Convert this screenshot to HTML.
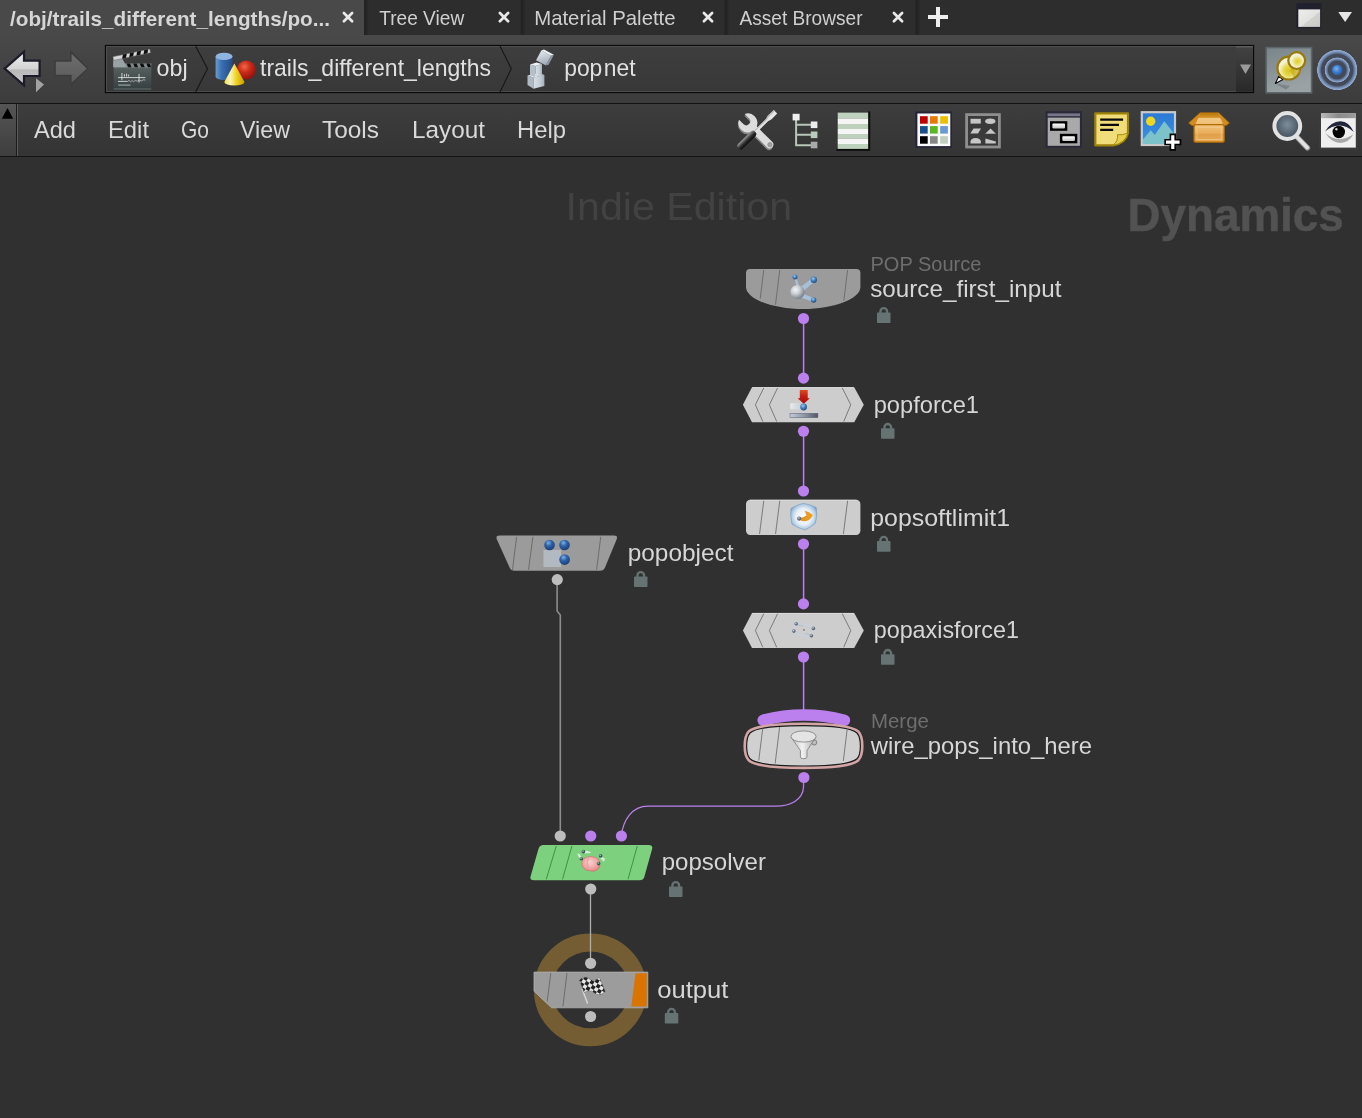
<!DOCTYPE html>
<html><head><meta charset="utf-8"><title>Network Editor</title>
<style>
html,body{margin:0;padding:0;background:#303030;overflow:hidden}
svg{display:block;will-change:transform}
text{font-family:"Liberation Sans",sans-serif}
</style></head><body>
<svg width="1362" height="1118" viewBox="0 0 1362 1118">
<defs>
<linearGradient id="gMenu" x1="0" y1="0" x2="0" y2="1"><stop offset="0" stop-color="#3d3d3d"/><stop offset="1" stop-color="#343434"/></linearGradient>
<linearGradient id="gStrip" x1="0" y1="0" x2="0" y2="1"><stop offset="0" stop-color="#555"/><stop offset="1" stop-color="#3e3e3e"/></linearGradient>
<linearGradient id="gField" x1="0" y1="0" x2="0" y2="1"><stop offset="0" stop-color="#3e3e3e"/><stop offset="1" stop-color="#383838"/></linearGradient>
<linearGradient id="gSep" x1="0" y1="0" x2="1" y2="0"><stop offset="0" stop-color="#202020"/><stop offset="0.3" stop-color="#232323"/><stop offset="1" stop-color="#2d2d2d"/></linearGradient>
<linearGradient id="gPath" x1="0" y1="0" x2="0" y2="1"><stop offset="0" stop-color="#494949"/><stop offset="1" stop-color="#3c3c3c"/></linearGradient>
</defs>

<rect x="0" y="0" width="1362" height="1118" fill="#303030"/>
<rect x="0" y="0" width="1362" height="36" fill="#2d2d2d"/>
<rect x="0" y="0" width="364" height="36" fill="#494949"/>
<rect x="364.2" y="0" width="5" height="35.4" fill="url(#gSep)"/>
<rect x="520.8" y="0" width="5" height="35.4" fill="url(#gSep)"/>
<rect x="724.6" y="0" width="5" height="35.4" fill="url(#gSep)"/>
<rect x="915.6" y="0" width="5" height="35.4" fill="url(#gSep)"/>
<rect x="0" y="35" width="1362" height="68" fill="url(#gPath)"/>
<rect x="0" y="103" width="1362" height="1" fill="#141414"/>
<rect x="0" y="104" width="1362" height="52" fill="url(#gMenu)"/>
<rect x="0" y="104" width="16" height="52" fill="url(#gStrip)"/>
<rect x="16" y="104" width="1" height="52" fill="#1c1c1c"/>
<rect x="17" y="104" width="1" height="52" fill="#5a5a5a"/>
<rect x="0" y="156" width="1362" height="1" fill="#141414"/>
<path d="M1.8 118.7 L13.2 118.7 L7.5 108 Z" fill="#000"/>
<text x="10" y="25.5" font-size="21" fill="#d6d6d6" textLength="320" lengthAdjust="spacingAndGlyphs" font-weight="bold" >/obj/trails_different_lengths/po...</text>
<text x="379.2" y="24.9" font-size="21" fill="#cfcfcf" textLength="85" lengthAdjust="spacingAndGlyphs" >Tree View</text>
<text x="534.2" y="24.9" font-size="21" fill="#cfcfcf" textLength="141.4" lengthAdjust="spacingAndGlyphs" >Material Palette</text>
<text x="739.5" y="24.9" font-size="21" fill="#cfcfcf" textLength="123" lengthAdjust="spacingAndGlyphs" >Asset Browser</text>
<path d="M343.9 13.000000000000002 L352.1 21.200000000000003 M352.1 13.000000000000002 L343.9 21.200000000000003" stroke="#e8e8e8" stroke-width="2.7" stroke-linecap="round" fill="none"/>
<path d="M499.9 13.000000000000002 L508.1 21.200000000000003 M508.1 13.000000000000002 L499.9 21.200000000000003" stroke="#e8e8e8" stroke-width="2.7" stroke-linecap="round" fill="none"/>
<path d="M703.9 13.000000000000002 L712.1 21.200000000000003 M712.1 13.000000000000002 L703.9 21.200000000000003" stroke="#e8e8e8" stroke-width="2.7" stroke-linecap="round" fill="none"/>
<path d="M893.9 13.000000000000002 L902.1 21.200000000000003 M902.1 13.000000000000002 L893.9 21.200000000000003" stroke="#e8e8e8" stroke-width="2.7" stroke-linecap="round" fill="none"/>
<path d="M938 7 V27 M928 17 H948" stroke="#eee" stroke-width="4" fill="none"/>
<rect x="105.5" y="45.5" width="1148" height="47" fill="url(#gField)" stroke="#0a0a0a" stroke-width="1.3"/>
<rect x="106.6" y="46.6" width="1145.8" height="44.8" fill="none" stroke="#5a5a5a" stroke-width="0.9" opacity="0.8"/>
<text x="156.6" y="76.2" font-size="24" fill="#e0e0e0" textLength="31" lengthAdjust="spacingAndGlyphs" >obj</text>
<text x="260" y="76.2" font-size="24" fill="#e0e0e0" textLength="231" lengthAdjust="spacingAndGlyphs" >trails_different_lengths</text>
<text x="564.2" y="76.2" dx="0 0 0 1.6" font-size="24" fill="#e0e0e0" textLength="71.4" lengthAdjust="spacingAndGlyphs">popnet</text>
<text x="34" y="138" font-size="24.5" fill="#d9d9d9" textLength="42" lengthAdjust="spacingAndGlyphs" >Add</text>
<text x="108" y="138" font-size="24.5" fill="#d9d9d9" textLength="41" lengthAdjust="spacingAndGlyphs" >Edit</text>
<text x="181" y="138" font-size="24.5" fill="#d9d9d9" textLength="28" lengthAdjust="spacingAndGlyphs" >Go</text>
<text x="240" y="138" font-size="24.5" fill="#d9d9d9" textLength="50" lengthAdjust="spacingAndGlyphs" >View</text>
<text x="322" y="138" font-size="24.5" fill="#d9d9d9" textLength="57" lengthAdjust="spacingAndGlyphs" >Tools</text>
<text x="412" y="138" font-size="24.5" fill="#d9d9d9" textLength="73" lengthAdjust="spacingAndGlyphs" >Layout</text>
<text x="517" y="138" font-size="24.5" fill="#d9d9d9" textLength="49" lengthAdjust="spacingAndGlyphs" >Help</text>
<defs>
<linearGradient id="lgArrow" x1="0" y1="0" x2="0" y2="1"><stop offset="0" stop-color="#f0f0f0"/><stop offset="0.5" stop-color="#d4d4d4"/><stop offset="0.55" stop-color="#b9b9b9"/><stop offset="1" stop-color="#c9c9c9"/></linearGradient>
<linearGradient id="lgArrowD" x1="0" y1="0" x2="0" y2="1"><stop offset="0" stop-color="#6e6e6e"/><stop offset="1" stop-color="#5a5a5a"/></linearGradient>
<linearGradient id="lgClap" x1="0" y1="0" x2="0" y2="1"><stop offset="0" stop-color="#56605f"/><stop offset="1" stop-color="#363f40"/></linearGradient>
<linearGradient id="lgCyl" x1="0" y1="0" x2="1" y2="0"><stop offset="0" stop-color="#6b9bd0"/><stop offset="0.35" stop-color="#3a70b4"/><stop offset="1" stop-color="#244a82"/></linearGradient>
<radialGradient id="rgRed" cx="0.4" cy="0.32" r="0.7"><stop offset="0" stop-color="#ee6a4a"/><stop offset="0.45" stop-color="#cc2a18"/><stop offset="1" stop-color="#8e120c"/></radialGradient>
<linearGradient id="lgCone" x1="0" y1="0" x2="1" y2="0"><stop offset="0" stop-color="#f6e04a"/><stop offset="0.3" stop-color="#fdf6b8"/><stop offset="0.6" stop-color="#f0d020"/><stop offset="1" stop-color="#c8a000"/></linearGradient>
<linearGradient id="lgCubeA" x1="0" y1="0" x2="1" y2="1"><stop offset="0" stop-color="#e4e9ee"/><stop offset="1" stop-color="#9aa6b2"/></linearGradient>
<linearGradient id="lgCubeB" x1="0" y1="0" x2="1" y2="0"><stop offset="0" stop-color="#d9e0e6"/><stop offset="0.6" stop-color="#c3ced7"/><stop offset="1" stop-color="#a3afba"/></linearGradient>
<linearGradient id="lgDrop" x1="0" y1="0" x2="0" y2="1"><stop offset="0" stop-color="#424242"/><stop offset="1" stop-color="#292929"/></linearGradient>
<linearGradient id="lgPinBg" x1="0" y1="0" x2="0.4" y2="1"><stop offset="0" stop-color="#79858a"/><stop offset="1" stop-color="#9aa2a4"/></linearGradient>
<radialGradient id="rgPin" cx="0.55" cy="0.55" r="0.5"><stop offset="0" stop-color="#e2cf2a"/><stop offset="0.35" stop-color="#eadc62"/><stop offset="0.7" stop-color="#f4f0cc"/><stop offset="1" stop-color="#f5f2dc"/></radialGradient>
<radialGradient id="rgPinB" cx="0.5" cy="0.62" r="0.55"><stop offset="0" stop-color="#d8c41c"/><stop offset="0.4" stop-color="#e6d84e"/><stop offset="0.75" stop-color="#f4f0d0"/><stop offset="1" stop-color="#f6f4e2"/></radialGradient>
<radialGradient id="rgTgtDot" cx="0.42" cy="0.38" r="0.65"><stop offset="0" stop-color="#7fb4ee"/><stop offset="0.5" stop-color="#3f7fd0"/><stop offset="1" stop-color="#2a5aa0"/></radialGradient>
<radialGradient id="rgRingO" cx="0.5" cy="0.5" r="0.5"><stop offset="0.76" stop-color="#3f4d63" stop-opacity="0"/><stop offset="0.8" stop-color="#53647f"/><stop offset="0.9" stop-color="#7f98c0"/><stop offset="0.97" stop-color="#8fa8cf"/><stop offset="1" stop-color="#8fa8cf" stop-opacity="0"/></radialGradient>
<radialGradient id="rgRingI" cx="0.5" cy="0.5" r="0.5"><stop offset="0.68" stop-color="#3f4d63" stop-opacity="0"/><stop offset="0.74" stop-color="#53647f"/><stop offset="0.88" stop-color="#7f98c0"/><stop offset="0.96" stop-color="#8fa8cf"/><stop offset="1" stop-color="#8fa8cf" stop-opacity="0"/></radialGradient>
<linearGradient id="lgWin" x1="0" y1="0" x2="1" y2="1"><stop offset="0" stop-color="#ededeb"/><stop offset="0.55" stop-color="#e2e2df"/><stop offset="0.56" stop-color="#d2d2cf"/><stop offset="1" stop-color="#c8c8c5"/></linearGradient>
<linearGradient id="lgHandle" x1="0" y1="0" x2="1" y2="1"><stop offset="0" stop-color="#7a7a7a"/><stop offset="0.4" stop-color="#3a3a3a"/><stop offset="1" stop-color="#151515"/></linearGradient>
<linearGradient id="lgHandle2" x1="0" y1="0" x2="0" y2="1"><stop offset="0" stop-color="#0c0c0c"/><stop offset="0.45" stop-color="#2e2e2e"/><stop offset="0.75" stop-color="#6a6a6a"/><stop offset="1" stop-color="#9a9a9a"/></linearGradient>
<linearGradient id="lgMini" x1="0" y1="0" x2="0" y2="1"><stop offset="0" stop-color="#ffffff"/><stop offset="1" stop-color="#c4c4c4"/></linearGradient>
<linearGradient id="lgImg" x1="0" y1="0" x2="0" y2="1"><stop offset="0" stop-color="#2a78d4"/><stop offset="1" stop-color="#3e94e0"/></linearGradient>
<linearGradient id="lgBoxTop" x1="0" y1="0" x2="0" y2="1"><stop offset="0" stop-color="#b87808"/><stop offset="0.4" stop-color="#d89a30"/><stop offset="0.45" stop-color="#f2c987"/><stop offset="1" stop-color="#eebc70"/></linearGradient>
<linearGradient id="lgBox" x1="0" y1="0" x2="0" y2="1"><stop offset="0" stop-color="#f2c27c"/><stop offset="0.5" stop-color="#e8ac58"/><stop offset="0.52" stop-color="#e0a048"/><stop offset="1" stop-color="#e6aa58"/></linearGradient>
<radialGradient id="rgLens" cx="0.5" cy="0.45" r="0.6"><stop offset="0" stop-color="#7d8e9c"/><stop offset="0.6" stop-color="#55636f"/><stop offset="1" stop-color="#3e4a55"/></radialGradient>
<linearGradient id="lgEyeBar" x1="0" y1="0" x2="1" y2="0"><stop offset="0" stop-color="#b9b9b9"/><stop offset="0.5" stop-color="#8a8a8a"/><stop offset="1" stop-color="#9c9c9c"/></linearGradient>
</defs>
<path d="M4.6 68.6 L24 51.6 V60.6 H39.6 V76 H24 V85.4 Z" fill="url(#lgArrow)" stroke="#1b1b29" stroke-width="2.2" stroke-linejoin="miter"/>
<path d="M36 78.2 V92.2 L44 84.6 Z" fill="#a2a2a2"/>
<path d="M88 68.6 L70.8 52 V61 H55 V75.6 H70.8 V84.6 Z" fill="url(#lgArrowD)" stroke="#3c3c3c" stroke-width="1.6"/>
<path d="M195.6 46 L207.5 68.75 L195.6 92" fill="none" stroke="#161616" stroke-width="1.1"/>
<path d="M500 46 L511.3 68.75 L500 92" fill="none" stroke="#161616" stroke-width="1.1"/>
<g>
<rect x="113.6" y="67.2" width="37.7" height="22.2" rx="0.8" fill="url(#lgClap)"/>
<path d="M113.6 67.6 H151.3 M113.6 89 H151.3" stroke="#7f8b8c" stroke-width="0.8" opacity="0.8"/>
<rect x="113.4" y="63.4" width="37.9" height="3.9" fill="#7e8788"/>
<path d="M126.6 63.4 h3.4 l1.5 3.9 h-3.4 Z" fill="#0e0e0e"/>
<path d="M133.2 63.4 h3.4 l1.5 3.9 h-3.4 Z" fill="#0e0e0e"/>
<path d="M139.8 63.4 h3.4 l1.5 3.9 h-3.4 Z" fill="#0e0e0e"/>
<path d="M146.4 63.4 h3.4 l1.5 3.9 h-3.4 Z" fill="#0e0e0e"/>
<path d="M113.2 57.3 H121.6 L126 65.6 V67 H113.2 Z" fill="#99a2a5"/>
<path d="M113.2 57.3 H121.6 L122.4 58.8 H113.2 Z" fill="#c4cacc"/>
<g transform="rotate(-11.8 113.5 58.6)"><rect x="113.5" y="56.6" width="37.4" height="3.8" fill="#d6d6d6" stroke="#6f6f6f" stroke-width="0.5"/>
<path d="M123.5 56.6 h4 l-1.6 3.8 h-4 Z" fill="#101010"/>
<path d="M130.8 56.6 h4 l-1.6 3.8 h-4 Z" fill="#101010"/>
<path d="M138.1 56.6 h4 l-1.6 3.8 h-4 Z" fill="#101010"/>
<path d="M145.4 56.6 h4 l-1.6 3.8 h-4 Z" fill="#101010"/>
</g>
<path d="M118 77.6 H145.4 M118 81.4 H127.5" stroke="#f0f0f0" stroke-width="0.8"/>
<path d="M127.5 81.4 l1.5 -1 l1.5 1.4 l1.6 -1.2 l1.6 1 l1.8 -1.2 l1.8 0.8 l2 -1 l2 0.8 l2 -1.2 l2 0.2" stroke="#e4e4e4" stroke-width="0.6" fill="none"/>
<path d="M121.9 73 V80.2 M124.4 74.2 V76.6 M126.6 73.6 V76.6 M128.6 74.6 V76.6 M139 74 V82.6" stroke="#f0f0f0" stroke-width="0.8"/>
<rect x="118.3" y="84.4" width="12.2" height="1.4" fill="#8b9596"/>
</g>
<g>
<path d="M215.6 56.5 V76.5 A8.4 3.6 0 0 0 232.5 76.5 V56.5 Z" fill="url(#lgCyl)"/>
<ellipse cx="224.05" cy="56.4" rx="8.45" ry="3.7" fill="#8fb4de"/>
<circle cx="246.3" cy="70" r="9.5" fill="url(#rgRed)"/>
<path d="M234.4 63.6 L224.3 81.9 A10.1 3.7 0 0 0 244.5 81.9 Z" fill="url(#lgCone)"/>
</g>
<g>
<path d="M527.5 75.5 L533.5 77.5 V88.8 L527.5 85 Z" fill="#aebbc6"/>
<path d="M533.5 77.5 L544.4 75 V86 L533.5 88.8 Z" fill="url(#lgCubeB)"/>
<path d="M527.5 75.5 L538 73 L544.4 75 L533.5 77.5 Z" fill="#e9edf1"/>
<path d="M530 64.5 L535.5 66 V77 L530 75.5 Z" fill="#b4c0ca"/>
<path d="M535.5 66 L542 64 V75 L535.5 77 Z" fill="url(#lgCubeB)"/>
<path d="M530 64.5 L536.5 62.5 L542 64 L535.5 66 Z" fill="#eef1f4"/>
<g transform="rotate(28 543.6 58)"><rect x="538" y="52.4" width="11.2" height="11.2" fill="url(#lgCubeA)"/><path d="M538 52.4 L540 50.4 H551.2 L549.2 52.4 Z" fill="#eef2f5"/><path d="M549.2 52.4 L551.2 50.4 V61.6 L549.2 63.6 Z" fill="#8a96a3"/></g>
</g>
<rect x="1236" y="46.3" width="17" height="45.5" fill="url(#lgDrop)"/>
<rect x="1236" y="46.3" width="17" height="1" fill="#6a6a6a"/>
<path d="M1240 64.6 H1251 L1245.5 73.9 Z" fill="#9a9a9a"/>
<rect x="1266.2" y="47.6" width="45.4" height="45.2" fill="url(#lgPinBg)" stroke="#5c676b" stroke-width="1.6"/>
<path d="M1275.4 83.6 L1290 86 L1286 89.5 Z" fill="#6f787b" opacity="0.7"/>
<path d="M1275.4 83.4 L1278.6 76.4 L1283 79.6 Z" fill="#fff" stroke="#0a0a0a" stroke-width="1.1" stroke-linejoin="round"/>
<circle cx="1288.8" cy="68.1" r="11.4" fill="url(#rgPinB)" stroke="#98790a" stroke-width="2.2"/>
<path d="M1290 70 L1296 62 L1301 72 L1294 78 Z" fill="#b89a10" opacity="0.55"/>
<circle cx="1296.7" cy="60.6" r="8.4" fill="url(#rgPin)" stroke="#98790a" stroke-width="2.2"/>
<circle cx="1337.2" cy="70" r="18" fill="#46506a" opacity="0.55"/>
<circle cx="1337.2" cy="70" r="20.4" fill="url(#rgRingO)"/>
<circle cx="1337.2" cy="70" r="12.8" fill="url(#rgRingI)"/>
<circle cx="1337.2" cy="70" r="5.3" fill="url(#rgTgtDot)"/>
<rect x="1296.4" y="3.2" width="25" height="25" fill="#20202f"/>
<rect x="1298.3" y="9.4" width="21.8" height="17.5" fill="url(#lgWin)"/>
<path d="M1338.3 11.9 H1352 L1345.1 22 Z" fill="#e6e6e6"/>
<g>
<g transform="translate(747.4 124.60000000000001) rotate(45)">
<path d="M-8.6 -4 A9.5 9.5 0 0 1 8.7 -3.8 H30.6 A3.8 3.8 0 0 1 30.6 3.8 H8.7 A9.5 9.5 0 0 1 -8.6 4 H-2.4 A4 4 0 0 0 -2.4 -4 Z" fill="#858585"/>
</g>
<g transform="translate(747.9 122.9) rotate(45)">
<path d="M-8.6 -4 A9.5 9.5 0 0 1 8.7 -3.8 H30.6 A3.8 3.8 0 0 1 30.6 3.8 H8.7 A9.5 9.5 0 0 1 -8.6 4 H-2.4 A4 4 0 0 0 -2.4 -4 Z" fill="#dcdcdc"/>
</g>
<circle cx="769.9" cy="144.7" r="2.1" fill="#a4a4a4" stroke="#7c7c7c" stroke-width="0.7"/>
<g transform="translate(775.5 111.75) rotate(135.4)">
<path d="M0 -2.4 L8 -2.6 L12 -1.5 H29 V1.5 H12 L8 2.6 L0 2.4 Z" fill="#e6e6e6"/>
<path d="M0 1 L8 1.2 L12 0.4 H29 V1.5 H12 L8 2.6 L0 2.4 Z" fill="#b4b4b4"/>
<rect x="28.6" y="-3.3" width="23.4" height="6.6" rx="2.6" fill="url(#lgHandle2)"/>
</g>
</g>
<g>
<path d="M796.1 120 V145.2 H811 M796.1 124.8 H811 M796.1 134.8 H811" fill="none" stroke="#b7c6b7" stroke-width="2"/>
<rect x="792.6" y="113.8" width="7" height="6.6" fill="#f0f0f0"/>
<rect x="810.8" y="121.5" width="6.6" height="6.6" fill="#ececec"/>
<rect x="810.8" y="131.5" width="6.6" height="6.6" fill="#b9ccb9"/>
<rect x="810.8" y="141.7" width="6.6" height="6.6" fill="#a9a9a9"/>
</g>
<g>
<rect x="836.4" y="111.4" width="33.8" height="39.4" fill="#0c0c0c"/>
<rect x="836.4" y="111.4" width="31.8" height="37.4" fill="#4a4a4a"/>
<rect x="837.8" y="112.7" width="30.3" height="5.85" fill="#bdd1bd"/>
<rect x="837.8" y="118.5" width="30.3" height="5.55" fill="#f5f5f5"/>
<rect x="837.8" y="124" width="30.3" height="5.05" fill="#bdd1bd"/>
<rect x="837.8" y="129" width="30.3" height="5.05" fill="#f5f5f5"/>
<rect x="837.8" y="134" width="30.3" height="4.65" fill="#bdd1bd"/>
<rect x="837.8" y="138.6" width="30.3" height="5.45" fill="#f5f5f5"/>
<rect x="837.8" y="144" width="30.3" height="4.85" fill="#bdd1bd"/>
</g>
<g>
<rect x="915.3" y="111.5" width="36.6" height="36.2" fill="#23233a"/>
<rect x="917.4" y="113.5" width="32.9" height="32.6" fill="#fafafa"/>
<rect x="920" y="116.2" width="7.7" height="7.5" fill="#c00000"/>
<rect x="930" y="116.2" width="7.7" height="7.5" fill="#e87800"/>
<rect x="940.2" y="116.2" width="7.7" height="7.5" fill="#e8c000"/>
<rect x="920" y="126.1" width="7.7" height="7.5" fill="#18508e"/>
<rect x="930" y="126.1" width="7.7" height="7.5" fill="#58b820"/>
<rect x="940.2" y="126.1" width="7.7" height="7.5" fill="#6a98d0"/>
<rect x="920" y="136.2" width="7.7" height="7.5" fill="#000"/>
<rect x="930" y="136.2" width="7.7" height="7.5" fill="#868686"/>
<rect x="940.2" y="136.2" width="7.7" height="7.5" fill="#c2cdc2"/>
</g>
<g>
<rect x="966.6" y="114.6" width="32.8" height="32.4" fill="#3a3a3a" stroke="#8e8e8e" stroke-width="2.8"/>
<rect x="970.5" y="118.8" width="10.3" height="4.8" fill="#c6c6c6"/>
<ellipse cx="990.3" cy="121.2" rx="5.1" ry="2.7" fill="#c6c6c6"/>
<path d="M973.5 128.4 H981 L978 133.6 H970.3 Z" fill="#c6c6c6"/>
<path d="M990.6 128.6 L995.8 133.8 H985.2 Z" fill="#c6c6c6"/>
<path d="M970.5 143.6 V141.5 Q971 138 975.7 138 Q980.4 138 980.9 141.5 V143.6 Z" fill="#c6c6c6"/>
<path d="M985.4 138.6 L995.8 141.4 V143.6 H985.4 Z" fill="#c6c6c6"/>
</g>
<g>
<rect x="1045.6" y="111.2" width="36.4" height="36.4" fill="#29293a"/>
<rect x="1047.6" y="113.4" width="32.4" height="2.8" fill="#777789"/>
<rect x="1047.7" y="117.6" width="32.2" height="28.2" fill="#a9a9a9"/>
<rect x="1050" y="121.2" width="17.3" height="9.6" fill="#000"/>
<rect x="1052.4" y="123.6" width="12.6" height="4.8" rx="0.8" fill="url(#lgMini)"/>
<rect x="1059.9" y="133.8" width="17.4" height="9.5" fill="#000"/>
<rect x="1062.3" y="136.2" width="12.6" height="4.7" rx="0.8" fill="url(#lgMini)"/>
</g>
<g>
<path d="M1095.3 113.3 H1128 V133 Q1126 143 1113 145.4 H1095.3 Z" fill="#f0dc78" stroke="#9c8208" stroke-width="2.2" stroke-linejoin="round"/>
<path d="M1128 133 Q1122 135.6 1117.5 134.6 Q1118.5 141 1113 145.4 Q1125 143.5 1128 133 Z" fill="#e6cf4e" stroke="#9c8208" stroke-width="0.9"/>
<path d="M1100.2 119.7 H1123.1 M1100.2 124.8 H1119 M1100.2 129.8 H1113.2" stroke="#0a0a0a" stroke-width="2.3"/>
</g>
<g>
<rect x="1141.8" y="112.2" width="33.2" height="32.8" fill="url(#lgImg)" stroke="#c9c9c9" stroke-width="2.2"/>
<circle cx="1150.7" cy="121.2" r="4.7" fill="#ecd71c"/>
<path d="M1143 143.9 V139.5 L1150.7 130.3 L1154.8 135 L1164.3 121.3 L1173.9 133.5 V143.9 Z" fill="#7cc3c9"/>
<path d="M1172.8 133.5 V150.8 M1164.3 142.1 H1181.3" stroke="#000" stroke-width="6.4"/>
<path d="M1172.8 135.3 V149 M1166 142.1 H1179.6" stroke="#fff" stroke-width="3.2"/>
</g>
<g>
<path d="M1200 112.8 H1218.8 L1229.4 123 L1226 125.6 H1192 L1188.6 123 Z" fill="#d28a22" stroke="#a86400" stroke-width="0.8" stroke-linejoin="round"/>
<path d="M1200.6 113.4 H1218.2 L1223.4 124.8 H1195 Z" fill="url(#lgBoxTop)"/>
<rect x="1194" y="124.7" width="30.2" height="17.5" rx="2" fill="url(#lgBox)" stroke="#b06a00" stroke-width="1.3"/>
<rect x="1197" y="127.2" width="24.2" height="12.4" fill="none" stroke="#f4cf94" stroke-width="0.8" opacity="0.8"/>
</g>
<g>
<path d="M1297 137 L1307.4 147.8" stroke="#9a9a9a" stroke-width="5.4" stroke-linecap="round"/>
<path d="M1297 137 L1307.2 147.4" stroke="#e2e2e2" stroke-width="3.6" stroke-linecap="round"/>
<circle cx="1287.3" cy="126" r="12.9" fill="url(#rgLens)" stroke="#e2e2e2" stroke-width="4"/>
</g>
<g>
<rect x="1320" y="112.4" width="36.8" height="36.2" fill="#efefef" stroke="#3b3b3b" stroke-width="2"/>
<rect x="1321" y="113.4" width="34.8" height="4.8" fill="url(#lgEyeBar)"/>
<path d="M1325.4 133 Q1331 142.8 1340.5 143 Q1349 142.6 1353.6 134 Q1347 139 1339 139 Q1331 138.5 1325.4 133 Z" fill="#a9a9a9"/>
<path d="M1325 131.4 Q1331 121.4 1340.4 121.2 Q1349.4 121.6 1353.8 132 Q1347.4 125.6 1339.6 125.4 Q1331.6 125.6 1325 131.4 Z" fill="#22263a"/>
<circle cx="1338.8" cy="132" r="6.2" fill="#050505"/>
<circle cx="1336.4" cy="129.2" r="1.2" fill="#d0d0d0"/>
</g>
<defs>
<radialGradient id="rgSil" cx="0.36" cy="0.34" r="0.7"><stop offset="0" stop-color="#f4f6f8"/><stop offset="0.45" stop-color="#c9cdd2"/><stop offset="1" stop-color="#727a84"/></radialGradient>
<radialGradient id="rgBlue" cx="0.4" cy="0.32" r="0.7"><stop offset="0" stop-color="#9ecdf2"/><stop offset="0.45" stop-color="#4a86c2"/><stop offset="1" stop-color="#1f4a7c"/></radialGradient>
<radialGradient id="rgBlueD" cx="0.4" cy="0.3" r="0.75"><stop offset="0" stop-color="#7fb0e6"/><stop offset="0.4" stop-color="#2f64ac"/><stop offset="1" stop-color="#163a70"/></radialGradient>
<radialGradient id="rgDark" cx="0.4" cy="0.35" r="0.7"><stop offset="0" stop-color="#c9d3dd"/><stop offset="0.5" stop-color="#67727f"/><stop offset="1" stop-color="#4a5562"/></radialGradient>
<radialGradient id="rgTeal" cx="0.4" cy="0.35" r="0.7"><stop offset="0" stop-color="#b9d0cc"/><stop offset="0.5" stop-color="#3b5c58"/><stop offset="1" stop-color="#28443f"/></radialGradient>
<linearGradient id="lgRed" x1="0" y1="0" x2="0" y2="1"><stop offset="0" stop-color="#dc4a1e"/><stop offset="0.5" stop-color="#c41a10"/><stop offset="1" stop-color="#a80d0d"/></linearGradient>
<linearGradient id="lgBar" x1="0" y1="0" x2="1" y2="0"><stop offset="0" stop-color="#c3cad8"/><stop offset="0.5" stop-color="#8f98a8"/><stop offset="1" stop-color="#4f5663"/></linearGradient>
<linearGradient id="lgTrail" x1="0" y1="0" x2="1" y2="0"><stop offset="0" stop-color="#ffffff" stop-opacity="0.6"/><stop offset="1" stop-color="#cfe0f0" stop-opacity="0.25"/></linearGradient>
<radialGradient id="rgShield" cx="0.5" cy="0.5" r="0.56"><stop offset="0" stop-color="#ffffff"/><stop offset="0.55" stop-color="#e6eff6"/><stop offset="0.85" stop-color="#a9c7e0"/><stop offset="1" stop-color="#6f9cc6"/></radialGradient>
<linearGradient id="lgOr" x1="0" y1="0" x2="1" y2="0"><stop offset="0" stop-color="#d9932b"/><stop offset="1" stop-color="#f6a01c"/></linearGradient>
<linearGradient id="lgFun" x1="0" y1="0" x2="1" y2="0"><stop offset="0" stop-color="#bdbdbd"/><stop offset="0.45" stop-color="#f2f2f2"/><stop offset="1" stop-color="#a8a8a8"/></linearGradient>
<radialGradient id="rgBrain" cx="0.45" cy="0.4" r="0.65"><stop offset="0" stop-color="#f7d2d2"/><stop offset="0.6" stop-color="#f2a4a4"/><stop offset="1" stop-color="#e07f7f"/></radialGradient>
<pattern id="chk" width="7.4" height="7.4" patternUnits="userSpaceOnUse" patternTransform="translate(580 977) rotate(32)"><rect width="7.4" height="7.4" fill="#e6e6e6"/><rect width="3.7" height="3.7" fill="#222"/><rect x="3.7" y="3.7" width="3.7" height="3.7" fill="#222"/></pattern>
</defs>
<circle cx="590.3" cy="989.9" r="47.4" fill="none" stroke="#745d33" stroke-width="18"/>
<path d="M803.6 318.5 V378.1" stroke="#bb80ee" stroke-width="1.5" fill="none"/>
<path d="M803.6 431.25 V491" stroke="#bb80ee" stroke-width="1.5" fill="none"/>
<path d="M803.6 544 V604" stroke="#bb80ee" stroke-width="1.5" fill="none"/>
<path d="M803.6 657 V712" stroke="#bb80ee" stroke-width="1.5" fill="none"/>
<path d="M803.7 777.5 L803.5 787 C803 800 790 806.1 776 806.1 L648 806.1 C632 806.1 623 820 621.4 836" stroke="#bb80ee" stroke-width="1.25" fill="none"/>
<path d="M557.1 580 V611 L560.3 615 V836" stroke="#8c8c8c" stroke-width="1.6" fill="none"/>
<path d="M590.5 889 V963" stroke="#adadad" stroke-width="1.3" fill="none"/>
<path d="M750 269 H856.4 Q860.4 269 860.4 273 V287 C860.4 299 833 309 803.2 309 C773 309 746 299 746 287 V273 Q746 269 750 269 Z" fill="#9b9b9b"/>
<path d="M763.75 270 L760.224 298.7" stroke="#6a6a6a" stroke-width="0.9"/>
<path d="M779.75 270 L775.4868571428572 304.7" stroke="#6a6a6a" stroke-width="0.9"/>
<path d="M847.6 270 L843.8405714285715 300.6" stroke="#6a6a6a" stroke-width="0.9"/>
<circle cx="803.5" cy="318.5" r="5.6" fill="#bb80ee"/>
<g transform="translate(877 307)"><path d="M3.4 7 V4.55 A3.35 3.35 0 0 1 10.1 4.55 V7" fill="none" stroke="#667373" stroke-width="2.3"/><rect x="0" y="5.4" width="13.5" height="10.6" rx="0.8" fill="#667373"/></g>
<text x="870.5" y="270.9" font-size="21" fill="#6e6e6e" textLength="110.9" lengthAdjust="spacingAndGlyphs">POP Source</text>
<text x="870.2" y="296.7" font-size="23.2" fill="#d6d6d6" textLength="191.3" lengthAdjust="spacingAndGlyphs">source_first_input</text>
<g>
<path d="M797 288 L794.2 277.5 L796.3 277 L799.6 287 Z" fill="#a9c3e0" opacity="0.9"/>
<path d="M800.5 287 L812.5 278 L814.8 281.3 L803 291.5 Z" fill="#a9c3e0" opacity="0.9"/>
<path d="M802.5 293.5 L813.8 298.2 L812.5 301.6 L800.5 297.5 Z" fill="#a9c3e0" opacity="0.9"/>
<circle cx="797.5" cy="292" r="7.1" fill="url(#rgSil)"/>
<circle cx="795" cy="277" r="2.5" fill="url(#rgBlue)"/>
<circle cx="813.8" cy="279.8" r="3.2" fill="url(#rgBlue)"/>
<circle cx="813.6" cy="300" r="2.7" fill="url(#rgBlue)"/>
</g>
<path d="M752 387.15 H854.2 L863.8 404.75 L854.2 422.35 H752 L742.9 404.75 Z" fill="#cdcdcd"/>
<path d="M752.4 387.65 H853.8" stroke="#dcdcdc" stroke-width="1"/>
<path d="M763.75 387.95 L755.4 404.75 L762.85 421.55" stroke="#707070" stroke-width="0.9" fill="none"/>
<path d="M777.6 387.95 L769.4 404.75 L776.7 421.55" stroke="#707070" stroke-width="0.9" fill="none"/>
<path d="M842.25 387.95 L850.75 404.75 L843.75 421.55" stroke="#707070" stroke-width="0.9" fill="none"/>
<circle cx="803.5" cy="378.15" r="5.6" fill="#bb80ee"/>
<circle cx="803.5" cy="431.25" r="5.6" fill="#bb80ee"/>
<g transform="translate(881 422.8)"><path d="M3.4 7 V4.55 A3.35 3.35 0 0 1 10.1 4.55 V7" fill="none" stroke="#667373" stroke-width="2.3"/><rect x="0" y="5.4" width="13.5" height="10.6" rx="0.8" fill="#667373"/></g>
<text x="873.7" y="412.6" font-size="23.2" fill="#d6d6d6" textLength="105.3" lengthAdjust="spacingAndGlyphs">popforce1</text>
<g>
<path d="M799.8 390 H807.7 V398.2 H809.9 L803.75 403.8 L797.6 398.2 H799.8 Z" fill="url(#lgRed)"/>
<rect x="790.2" y="403" width="11" height="6.2" rx="1.5" fill="url(#lgTrail)"/>
<circle cx="803.6" cy="407" r="3.4" fill="url(#rgBlue)"/>
<rect x="790" y="413.3" width="27.9" height="4.4" fill="url(#lgBar)" stroke="#5a6070" stroke-width="0.5"/>
</g>
<rect x="746" y="499.75" width="114.4" height="35.3" rx="4.2" fill="#cdcdcd"/>
<path d="M750 500.3 H856.4" stroke="#dcdcdc" stroke-width="1"/>
<path d="M763.75 500.8 L759.55 534" stroke="#707070" stroke-width="0.9" fill="none"/>
<path d="M779.75 500.8 L775.55 534" stroke="#707070" stroke-width="0.9" fill="none"/>
<path d="M847.6 500.8 L843.4 534" stroke="#707070" stroke-width="0.9" fill="none"/>
<circle cx="803.5" cy="491" r="5.6" fill="#bb80ee"/>
<circle cx="803.5" cy="544" r="5.6" fill="#bb80ee"/>
<g transform="translate(877 535.7)"><path d="M3.4 7 V4.55 A3.35 3.35 0 0 1 10.1 4.55 V7" fill="none" stroke="#667373" stroke-width="2.3"/><rect x="0" y="5.4" width="13.5" height="10.6" rx="0.8" fill="#667373"/></g>
<text x="870.2" y="525.5" font-size="23.2" fill="#d6d6d6" textLength="139.8" lengthAdjust="spacingAndGlyphs">popsoftlimit1</text>
<g>
<path d="M803.4 503.4 Q810 504.5 816.2 507.4 Q817.8 516 815.2 523.5 Q810.5 527.5 804.8 529.9 Q797.5 527.8 792 524.2 Q790 516 791 508.4 Q797 504.8 803.4 503.4 Z" fill="url(#rgShield)" stroke="#7fa6cc" stroke-width="0.8"/>
<path d="M800.6 517.8 Q804 517.4 806.6 515.2 L804.6 510.8 Q809.4 511.8 812.9 515 Q811.6 518.6 808.6 520.2 Q804.6 522 800.6 520.6 Z" fill="url(#lgOr)"/>
<circle cx="799.1" cy="518.6" r="2.1" fill="url(#rgDark)"/>
</g>
<path d="M752 612.9 H854.2 L863.8 630.5 L854.2 648.1 H752 L742.9 630.5 Z" fill="#cdcdcd"/>
<path d="M752.4 613.4 H853.8" stroke="#dcdcdc" stroke-width="1"/>
<path d="M763.75 613.7 L755.4 630.5 L762.85 647.3" stroke="#707070" stroke-width="0.9" fill="none"/>
<path d="M777.6 613.7 L769.4 630.5 L776.7 647.3" stroke="#707070" stroke-width="0.9" fill="none"/>
<path d="M842.25 613.7 L850.75 630.5 L843.75 647.3" stroke="#707070" stroke-width="0.9" fill="none"/>
<circle cx="803.5" cy="603.9" r="5.6" fill="#bb80ee"/>
<circle cx="803.5" cy="657.0" r="5.6" fill="#bb80ee"/>
<g transform="translate(881 648.8)"><path d="M3.4 7 V4.55 A3.35 3.35 0 0 1 10.1 4.55 V7" fill="none" stroke="#667373" stroke-width="2.3"/><rect x="0" y="5.4" width="13.5" height="10.6" rx="0.8" fill="#667373"/></g>
<text x="873.7" y="638.4" font-size="23.2" fill="#d6d6d6" textLength="145.3" lengthAdjust="spacingAndGlyphs">popaxisforce1</text>
<g>
<ellipse cx="803.6" cy="629.8" rx="10.5" ry="5.8" fill="none" stroke="#c3d3e4" stroke-width="1.4" opacity="0.75" transform="rotate(14 803.6 629.8)"/>
<path d="M797 625.2 L803 626" stroke="#a9bccf" stroke-width="0.8"/><path d="M805 633.6 L810.6 634.6" stroke="#a9bccf" stroke-width="0.8"/>
<rect x="803.1" y="629.1" width="1.6" height="1.6" fill="#8a7665"/>
<circle cx="796.2" cy="623.8" r="1.8" fill="url(#rgDark)"/>
<circle cx="813.4" cy="628.4" r="1.8" fill="url(#rgDark)"/>
<circle cx="793.9" cy="631.1" r="1.8" fill="url(#rgDark)"/>
<circle cx="811.4" cy="635.8" r="1.8" fill="url(#rgDark)"/>
</g>
<path d="M763.2 720.2 Q803.7 709.6 844.4 720.2" stroke="#bb80ee" stroke-width="11.5" stroke-linecap="round" fill="none"/>
<path d="M803.5 725.6 C835 725.6 852 728.5 857 733 C861.5 738 861.5 754 857 758.8 C852 763.5 835 766 803.5 766 C772 766 755 763.5 750 758.8 C745.5 754 745.5 738 750 733 C755 728.5 772 725.6 803.5 725.6 Z" fill="#cdcdcd" stroke="#d4a5a5" stroke-width="6.4"/>
<path d="M803.5 725.6 C835 725.6 852 728.5 857 733 C861.5 738 861.5 754 857 758.8 C852 763.5 835 766 803.5 766 C772 766 755 763.5 750 758.8 C745.5 754 745.5 738 750 733 C755 728.5 772 725.6 803.5 725.6 Z" fill="#d0d0d0" stroke="#1a1a1a" stroke-width="1.2"/>
<path d="M762.6805714285714 728.6 L758.7614285714286 760.5" stroke="#707070" stroke-width="0.9"/>
<path d="M779.6271428571429 727 L775.1428571428571 763.5" stroke="#707070" stroke-width="0.9"/>
<path d="M847.2805714285714 728.6 L843.3000000000001 761" stroke="#707070" stroke-width="0.9"/>
<circle cx="803.9" cy="777.5" r="5.6" fill="#bb80ee"/>
<text x="871" y="727.8000000000001" font-size="21" fill="#6e6e6e" textLength="57.9" lengthAdjust="spacingAndGlyphs">Merge</text>
<text x="870.7" y="753.6" font-size="23.2" fill="#d6d6d6" textLength="221.3" lengthAdjust="spacingAndGlyphs">wire_pops_into_here</text>
<g>
<circle cx="814.2" cy="742.4" r="2.6" fill="#bdbdbd" stroke="#6f6f6f" stroke-width="0.8"/>
<path d="M791 737 L800.4 750.5 V757 Q800.4 758.7 803.7 758.7 Q807 758.7 807 757 V750.5 L816 737 Z" fill="url(#lgFun)" stroke="#6f6f6f" stroke-width="0.7"/>
<ellipse cx="803.5" cy="736.5" rx="12.6" ry="5.6" fill="#e4e4e4" stroke="#6f6f6f" stroke-width="0.7"/>
</g>
<path d="M499.5 535.6 H614 Q618.3 535.6 616.6 539.5 L605 567.5 Q603.6 570.7 600 570.7 H514.5 Q511 570.7 509.6 567.5 L496.9 539.5 Q495.2 535.6 499.5 535.6 Z" fill="#9b9b9b"/>
<path d="M516.6 536.8 L512.5 569.8" stroke="#666" stroke-width="0.9"/>
<path d="M532.9 536.8 L528.5 569.8" stroke="#666" stroke-width="0.9"/>
<path d="M600.75 536.8 L596.6 569.8" stroke="#666" stroke-width="0.9"/>
<circle cx="557.25" cy="579.6" r="5.6" fill="#bdbdbd"/>
<g transform="translate(634 571)"><path d="M3.4 7 V4.55 A3.35 3.35 0 0 1 10.1 4.55 V7" fill="none" stroke="#667373" stroke-width="2.3"/><rect x="0" y="5.4" width="13.5" height="10.6" rx="0.8" fill="#667373"/></g>
<text x="627.7" y="561.2" font-size="23.2" fill="#d6d6d6" textLength="105.8" lengthAdjust="spacingAndGlyphs">popobject</text>
<g>
<rect x="543.5" y="550" width="17.5" height="17" fill="#b6bec8" opacity="0.85"/>
<circle cx="549.5" cy="545" r="5.3" fill="url(#rgBlueD)"/>
<circle cx="564.5" cy="545" r="5.3" fill="url(#rgBlueD)"/>
<circle cx="564.6" cy="559.6" r="5.3" fill="url(#rgBlueD)"/>
</g>
<path d="M543.5 845 H648.5 Q653.3 845 652.1 849 L644.3 877 Q643.3 880.3 639.5 880.3 H534 Q529.3 880.3 530.6 876.3 L538.6 848.5 Q539.6 845 543.5 845 Z" fill="#7dd07d"/>
<path d="M556.25 846 L546.25 879.4" stroke="#2f8f3f" stroke-width="0.9"/>
<path d="M571.9 846 L562.5 879.4" stroke="#2f8f3f" stroke-width="0.9"/>
<path d="M637.25 846 L628 879.4" stroke="#2f8f3f" stroke-width="0.9"/>
<circle cx="560.25" cy="836" r="5.6" fill="#bdbdbd"/>
<circle cx="590.75" cy="836" r="5.6" fill="#bb80ee"/>
<circle cx="621.4" cy="836" r="5.6" fill="#bb80ee"/>
<circle cx="590.75" cy="889" r="5.6" fill="#bdbdbd"/>
<g transform="translate(669 881)"><path d="M3.4 7 V4.55 A3.35 3.35 0 0 1 10.1 4.55 V7" fill="none" stroke="#667373" stroke-width="2.3"/><rect x="0" y="5.4" width="13.5" height="10.6" rx="0.8" fill="#667373"/></g>
<text x="661.7" y="870.3" font-size="23.2" fill="#d6d6d6" textLength="104.3" lengthAdjust="spacingAndGlyphs">popsolver</text>
<g>
<path d="M583.4 850.6 Q588 850.6 591.5 852.4 Q588 854 583.6 852.8 Z" fill="#e9f3ea" opacity="0.85"/>
<path d="M577.3 854.2 Q578.4 852.6 580 854.2 L582.2 858.4 L580 859.6 Z" fill="#e9f3ea" opacity="0.8"/>
<path d="M600.6 856.5 L604.6 858.2 Q605.6 860.6 603.8 861.8 L600 858 Z" fill="#e9f3ea" opacity="0.8"/>
<path d="M582 864.5 Q581.5 859 586 857.5 Q590 855.5 594 857 Q599 858 599.8 863 Q600.5 868 596.5 870 Q594 872.3 590.5 870.8 Q586 871 584 868.5 Q582.2 867 582 864.5 Z" fill="url(#rgBrain)" stroke="#cf6e6e" stroke-width="0.6"/>
<path d="M588.5 858 Q586.5 862 588 868" stroke="#e58a8a" stroke-width="0.6" fill="none"/>
<circle cx="583.4" cy="851.6" r="1.8" fill="url(#rgTeal)"/>
<circle cx="600.6" cy="855.9" r="1.8" fill="url(#rgTeal)"/>
<circle cx="581.3" cy="858.7" r="1.8" fill="url(#rgTeal)"/>
<circle cx="598.6" cy="863.6" r="1.8" fill="url(#rgTeal)"/>
</g>
<path d="M534 972.1 H647.8 V1007.8 H551.6 L534 991.2 Z" fill="#9c9c9c" stroke="#b0b0b0" stroke-width="0.8"/>
<path d="M635.6 973.3 H646.8 V1006.6 H631.3 Z" fill="#d97400"/>
<path d="M550.8 973 L547.2 1001.5 M567 973 L562.9 1006.5" stroke="#666" stroke-width="0.9"/>
<circle cx="590.6" cy="963.3" r="5.6" fill="#bdbdbd"/>
<circle cx="590.6" cy="1016.5" r="5.6" fill="#bdbdbd"/>
<g transform="translate(664.8 1007.6)"><path d="M3.4 7 V4.55 A3.35 3.35 0 0 1 10.1 4.55 V7" fill="none" stroke="#667373" stroke-width="2.3"/><rect x="0" y="5.4" width="13.5" height="10.6" rx="0.8" fill="#667373"/></g>
<text x="657.2" y="998.3" font-size="23.2" fill="#d6d6d6" textLength="71.3" lengthAdjust="spacingAndGlyphs">output</text>
<g>
<path d="M582.2 989 L587.4 1003" stroke="#d2d2d2" stroke-width="1.6" stroke-linecap="round"/>
<path d="M579.4 980.2 Q584 975 589 978.6 Q594 983 599.2 977.2 L605.2 991.6 Q599.5 997 594.5 993 Q589.5 988.6 584.2 992.6 Z" fill="url(#chk)" stroke="#555" stroke-width="0.4"/>
</g>
<text x="565.6" y="220" font-size="38.5" fill="#424242" textLength="226.5" lengthAdjust="spacingAndGlyphs">Indie Edition</text>
<text x="1127.4" y="230.6" font-size="46" font-weight="bold" fill="#525252" stroke="#525252" stroke-width="0.5" textLength="216.4" lengthAdjust="spacingAndGlyphs">Dynamics</text>
</svg></body></html>
